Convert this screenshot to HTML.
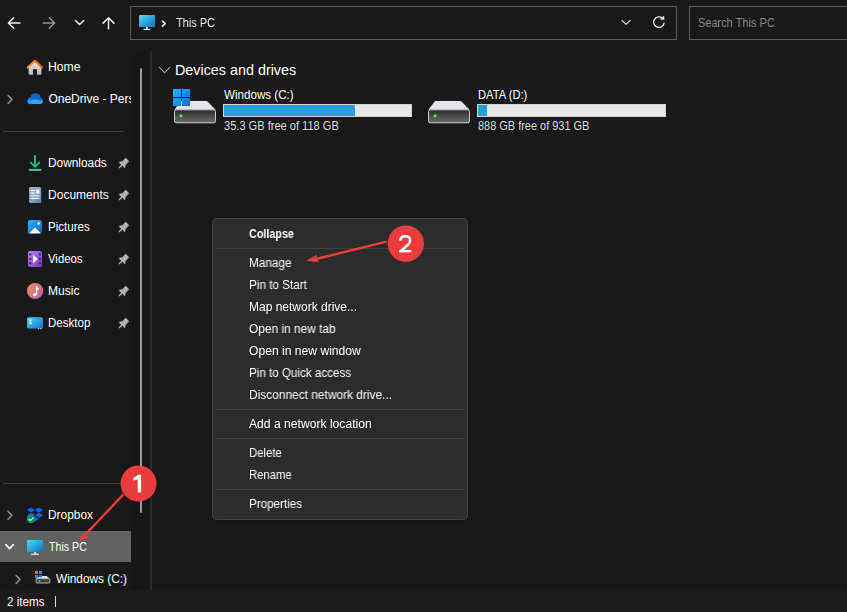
<!DOCTYPE html>
<html><head><meta charset="utf-8">
<style>
*{margin:0;padding:0;box-sizing:border-box}
html,body{width:847px;height:612px;overflow:hidden;background:#191919}
body{position:relative;font-family:"Liberation Sans",sans-serif;color:#fff}
.a{position:absolute}
.t{position:absolute;white-space:nowrap;line-height:20px;font-size:12px;color:#fff}
svg{position:absolute;overflow:visible}
</style></head><body>

<!-- panes -->
<div class="a" style="left:132px;top:51px;width:18px;height:539px;background:#171717"></div>
<div class="a" style="left:150px;top:51px;width:2px;height:539px;background:#2a2a2a"></div>
<div class="a" style="left:0;top:590px;width:847px;height:22px;background:#1c1c1c"></div>

<!-- toolbar icons -->
<svg style="left:0;top:0" width="130" height="45" viewBox="0 0 130 45">
  <g fill="none" stroke-linecap="round" stroke-linejoin="round" stroke-width="1.5">
    <path d="M8.4 23H19.9M13.7 17.7L8.4 23L13.7 28.3" stroke="#f2f2f2"/>
    <path d="M43.1 23H54.6M49.3 17.7L54.6 23L49.3 28.3" stroke="#939393"/>
    <path d="M75.4 20.4L79.6 24.6L83.8 20.4" stroke="#f0f0f0" stroke-width="1.4"/>
    <path d="M108.5 17.7V28.7M103.1 23.1L108.5 17.7L113.9 23.1" stroke="#f2f2f2"/>
  </g>
</svg>

<!-- address bar -->
<div class="a" style="left:130px;top:6px;width:547px;height:34px;border:1px solid #5c5c5c"></div>
<svg style="left:0;top:0" width="847" height="45" viewBox="0 0 847 45">
  <defs>
    <linearGradient id="mon" x1="0" y1="0" x2="1" y2="1"><stop offset="0" stop-color="#45e2f5"/><stop offset="1" stop-color="#0d6fca"/></linearGradient>
  </defs>
  <rect x="139" y="15" width="16" height="12" rx="1" fill="url(#mon)"/>
  <rect x="146" y="27" width="2" height="2" fill="#c9d3dc"/>
  <rect x="143.5" y="28.8" width="7" height="1.3" fill="#d5dde4"/>
  <path d="M162.5 21.1L165.2 23.6L162.5 26.1" fill="none" stroke="#ececec" stroke-width="1.6" stroke-linecap="round" stroke-linejoin="round"/>
  <path d="M622 20.3L626.1 24.3L630.2 20.3" fill="none" stroke="#e0e0e0" stroke-width="1.1" stroke-linecap="round" stroke-linejoin="round"/>
  <path d="M664.1 23.1A5.3 5.3 0 1 1 661.6 17.6" fill="none" stroke="#ececec" stroke-width="1.25" stroke-linecap="round"/>
  <path d="M663.8 15.9L664.2 19.6L660.3 19.4Z" fill="#ececec" stroke="#ececec" stroke-width="0.5" stroke-linejoin="round"/>
</svg>

<!-- search -->
<div class="a" style="left:689px;top:6px;width:170px;height:34px;border:1px solid #5c5c5c"></div>

<!-- nav pane -->
<div class="a" style="left:0;top:531px;width:131px;height:31px;background:#626262"></div>
<div class="a" style="left:3px;top:131px;width:121px;height:1px;background:#3a3a3a"></div>
<div class="a" style="left:3px;top:483px;width:121px;height:1px;background:#3a3a3a"></div>
<div class="a" style="left:140px;top:68px;width:2px;height:445px;background:#9e9e9e;border-radius:1px"></div>

<div class="a" style="left:48px;top:51px;width:83px;height:60px;overflow:hidden">
<div class="t" style="left:0.4px;top:5.84px;font-size:12px;color:#fff;transform:scaleX(1.018);transform-origin:0 0;">Home</div>
<div class="t" style="left:0.4px;top:37.74px;font-size:12px;color:#fff;">OneDrive - Personal</div>

</div>

<!-- status bar -->
<div class="a" style="left:55px;top:596px;width:1px;height:11px;background:#d6d6d6"></div>

<!-- progress bars -->
<div class="a" style="left:223px;top:104px;width:189px;height:13px;background:#e6e6e6;border:1px solid #d2d2d2"></div>
<div class="a" style="left:224px;top:105px;width:131px;height:11px;background:#26a0da"></div>
<div class="a" style="left:477px;top:104px;width:189px;height:13px;background:#e6e6e6;border:1px solid #d2d2d2"></div>
<div class="a" style="left:478px;top:105px;width:9px;height:11px;background:#26a0da"></div>

<!-- icons -->
<svg style="left:0;top:0" width="847" height="612" viewBox="0 0 847 612">
  <defs>
    <linearGradient id="mon2" x1="0" y1="0" x2="1" y2="1"><stop offset="0" stop-color="#45e2f5"/><stop offset="1" stop-color="#0d6fca"/></linearGradient>
    <linearGradient id="roof" x1="0" y1="0" x2="1" y2="0"><stop offset="0" stop-color="#ff9d1c"/><stop offset="1" stop-color="#e8620c"/></linearGradient>
    <linearGradient id="house" x1="0" y1="0" x2="0" y2="1"><stop offset="0" stop-color="#ececec"/><stop offset="1" stop-color="#b4b4b4"/></linearGradient>
    <linearGradient id="dl" x1="0" y1="0" x2="0" y2="1"><stop offset="0" stop-color="#33d39e"/><stop offset="1" stop-color="#22b3a8"/></linearGradient>
    <linearGradient id="doc" x1="0" y1="0" x2="1" y2="1"><stop offset="0" stop-color="#a3c0dc"/><stop offset="1" stop-color="#6283a6"/></linearGradient>
    <linearGradient id="pic" x1="0" y1="0" x2="1" y2="1"><stop offset="0" stop-color="#2fb2f4"/><stop offset="1" stop-color="#0866cc"/></linearGradient>
    <linearGradient id="vid" x1="0" y1="0" x2="1" y2="1"><stop offset="0" stop-color="#bb82f7"/><stop offset="1" stop-color="#7636c9"/></linearGradient>
    <linearGradient id="mus" x1="0" y1="0" x2="1" y2="1"><stop offset="0" stop-color="#f8904c"/><stop offset="1" stop-color="#b859b8"/></linearGradient>
    <linearGradient id="desk" x1="0" y1="0" x2="1" y2="1"><stop offset="0" stop-color="#4dd3f3"/><stop offset="1" stop-color="#0c76d0"/></linearGradient>
    <linearGradient id="win" x1="0" y1="0" x2="1" y2="1"><stop offset="0" stop-color="#25a9f2"/><stop offset="1" stop-color="#0a6ad6"/></linearGradient>
    <linearGradient id="winbig" gradientUnits="userSpaceOnUse" x1="173" y1="89" x2="190" y2="106"><stop offset="0" stop-color="#2db3f6"/><stop offset="1" stop-color="#0b6cd6"/></linearGradient>
    <linearGradient id="winsm" gradientUnits="userSpaceOnUse" x1="35" y1="571" x2="42" y2="578"><stop offset="0" stop-color="#2db3f6"/><stop offset="1" stop-color="#0b6cd6"/></linearGradient>
    <linearGradient id="front" x1="0" y1="0" x2="0" y2="1"><stop offset="0" stop-color="#2a2a2a"/><stop offset="1" stop-color="#6e6e6e"/></linearGradient>
    <radialGradient id="led"><stop offset="0" stop-color="#a8ff9a"/><stop offset="0.5" stop-color="#3ad23a"/><stop offset="1" stop-color="#1a8a1a" stop-opacity="0.3"/></radialGradient>
    <g id="pin"><path d="M-2.4 -7.4H2.4V-2.2L4 -0.5V0.7H0.7V4.6H-0.7V0.7H-4V-0.5L-2.4 -2.2Z" fill="#a9b5bd"/></g>
    <g id="bigdrive">
      <path d="M181 101H207L215.6 109.8H174.4Z" fill="#e4e4e8"/>
      <rect x="174.5" y="109.8" width="41" height="13" rx="2" fill="url(#front)" stroke="#cfcfcf" stroke-width="1"/>
      <circle cx="181" cy="115.9" r="2.2" fill="url(#led)"/>
    </g>
  </defs>

  <!-- Home -->
  <path d="M28.6 67.2L35 61.4L41.4 67.2V73.6Q41.4 74.8 40.2 74.8H37V69.2H33V74.8H29.8Q28.6 74.8 28.6 73.6Z" fill="url(#house)"/>
  <path d="M27.8 67.6L35 60.8L42.2 67.6" fill="none" stroke="url(#roof)" stroke-width="2.1" stroke-linecap="round" stroke-linejoin="round"/>

  <!-- OneDrive -->
  <clipPath id="odc"><circle cx="35.5" cy="98.7" r="5.1"/><circle cx="30.8" cy="100.8" r="3.35"/><circle cx="39.9" cy="101.1" r="3"/><rect x="30.8" y="100.5" width="9.1" height="3.6"/></clipPath>
  <g clip-path="url(#odc)">
    <rect x="26" y="92" width="18" height="13" fill="#1784e6"/>
    <circle cx="35.5" cy="98.7" r="5.1" fill="#0d66c9"/>
    <path d="M26.5 101.4Q31 99.4 35.8 99.2Q40.2 99.5 44 101.9V105H26.5Z" fill="#2aa6f2"/>
  </g>
  <path d="M8.2 95.6L12.1 99.5L8.2 103.4" fill="none" stroke="#8c8c8c" stroke-width="1.5" stroke-linecap="round" stroke-linejoin="round"/>

  <!-- Downloads -->
  <path d="M35 155.8V166.6M30.7 162.5L35 166.8L39.3 162.5" fill="none" stroke="url(#dl)" stroke-width="1.75" stroke-linecap="round" stroke-linejoin="round"/>
  <rect x="28.9" y="168.9" width="12.3" height="2" fill="#2ed0a0"/>
  <use href="#pin" transform="translate(122.2 164.8) rotate(45)"/>

  <!-- Documents -->
  <rect x="29.1" y="186.9" width="12.1" height="16.2" rx="1.6" fill="url(#doc)"/>
  <rect x="31" y="190" width="4.2" height="1.1" fill="#f4f8fc"/>
  <rect x="31" y="192.6" width="4.2" height="1.1" fill="#f4f8fc"/>
  <rect x="36.2" y="189.6" width="3.2" height="4" fill="#f4f8fc"/>
  <rect x="31" y="195.3" width="8.4" height="1.1" fill="#f4f8fc"/>
  <rect x="31" y="197.9" width="8.4" height="1.1" fill="#f4f8fc"/>
  <use href="#pin" transform="translate(122.2 196.8) rotate(45)"/>

  <!-- Pictures -->
  <rect x="27.9" y="220" width="14" height="14" rx="2" fill="url(#pic)"/>
  <path d="M29.3 233.2L35 227.6L40.7 233.2Z" fill="#fff"/>
  <circle cx="38.6" cy="223.4" r="1.3" fill="#fff"/>
  <use href="#pin" transform="translate(122.2 228.8) rotate(45)"/>

  <!-- Videos -->
  <rect x="28" y="251" width="14" height="16" rx="2" fill="url(#vid)"/>
  <g fill="#3e1a70">
    <rect x="29.2" y="253.4" width="2" height="2"/><rect x="29.2" y="257.8" width="2" height="2"/><rect x="29.2" y="262.2" width="2" height="2"/>
    <rect x="38.8" y="253.4" width="2" height="2"/><rect x="38.8" y="257.8" width="2" height="2"/><rect x="38.8" y="262.2" width="2" height="2"/>
  </g>
  <path d="M33 254.6L38 259L33 263.4Z" fill="#f2e8ff"/>
  <use href="#pin" transform="translate(122.2 260.8) rotate(45)"/>

  <!-- Music -->
  <circle cx="35.1" cy="291" r="8.1" fill="url(#mus)"/>
  <path d="M36.6 286.4V294.6" stroke="#fff" stroke-width="1.4"/>
  <path d="M35.9 285.9Q38.9 286.9 38.9 290L37.5 289.4Q37.3 288.2 35.9 287.8Z" fill="#fff"/>
  <ellipse cx="34.8" cy="294.8" rx="1.9" ry="1.7" fill="#fff"/>
  <use href="#pin" transform="translate(122.2 292.8) rotate(45)"/>

  <!-- Desktop -->
  <rect x="27" y="317.2" width="16" height="11.3" rx="1.5" fill="url(#desk)"/>
  <rect x="29.4" y="319.3" width="2.2" height="2" fill="#e8fbff"/>
  <rect x="29.4" y="322.3" width="2.2" height="2" fill="#e8fbff"/>
  <rect x="38" y="328" width="1.2" height="1.2" fill="#c0c0c0"/><rect x="40.2" y="328" width="1.2" height="1.2" fill="#c0c0c0"/>
  <use href="#pin" transform="translate(122.2 324.8) rotate(45)"/>

  <!-- Dropbox -->
  <g fill="#0061fe">
    <path d="M27 510L31 507.4L35 510L31 512.6Z"/>
    <path d="M35 510L39 507.4L43 510L39 512.6Z"/>
    <path d="M27 515.2L31 512.6L35 515.2L31 517.8Z"/>
    <path d="M35 515.2L39 512.6L43 515.2L39 517.8Z"/>
    <path d="M31 519L35 516.4L39 519L35 521.6Z"/>
  </g>
  <circle cx="30.9" cy="519.1" r="4.2" fill="#12954e"/>
  <path d="M29 519.2L30.5 520.5L33 517.8" fill="none" stroke="#e8f5ec" stroke-width="1.1" stroke-linecap="round" stroke-linejoin="round"/>
  <path d="M8 511.4L11.9 515.3L8 519.2" fill="none" stroke="#8c8c8c" stroke-width="1.5" stroke-linecap="round" stroke-linejoin="round"/>

  <!-- This PC -->
  <rect x="27.1" y="540" width="15.8" height="12" rx="1" fill="url(#mon2)"/>
  <rect x="34" y="552" width="2.2" height="2" fill="#c8d2da"/>
  <rect x="30.9" y="553.8" width="8.2" height="1.3" rx="0.6" fill="#d6dee4"/>
  <path d="M5.8 544.7L9.6 548.5L13.4 544.7" fill="none" stroke="#f4f4f4" stroke-width="1.8" stroke-linecap="round" stroke-linejoin="round"/>

  <!-- small Windows drive -->
  <g fill="url(#winsm)">
    <rect x="35" y="571" width="3" height="3"/><rect x="39" y="571" width="3" height="3"/>
    <rect x="35" y="575" width="3" height="3"/><rect x="39" y="575" width="3" height="3"/>
  </g>
  <path d="M42 576H46.5L49.6 578.6H36.2L38 577.2H42Z" fill="#e8e8e8"/>
  <rect x="36.2" y="578.6" width="13.6" height="4.4" rx="0.6" fill="#3e3e3e" stroke="#d0d0d0" stroke-width="0.8"/>
  <circle cx="39.4" cy="580.8" r="0.9" fill="#3ae03a"/>
  <path d="M16.2 575.6L20.1 579.5L16.2 583.4" fill="none" stroke="#8c8c8c" stroke-width="1.5" stroke-linecap="round" stroke-linejoin="round"/>

  <!-- Devices chevron -->
  <path d="M159.4 67.4L164.6 72.6L169.8 67.4" fill="none" stroke="#a8a8a8" stroke-width="1.1" stroke-linecap="round" stroke-linejoin="round"/>

  <!-- drives -->
  <use href="#bigdrive"/>
  <g fill="url(#winbig)">
    <rect x="173" y="89" width="8" height="8"/><rect x="182" y="89" width="8" height="8"/>
    <rect x="173" y="98" width="8" height="8"/><rect x="182" y="98" width="8" height="8"/>
  </g>
  <use href="#bigdrive" transform="translate(254 0)"/>
</svg>



<!-- context menu -->
<div class="a" style="left:212px;top:218px;width:256px;height:302px;background:#2c2c2c;border:1px solid #444444;border-radius:4.5px;box-shadow:0 0 3px rgba(0,0,0,0.35)"></div>
<div class="a" style="left:217px;top:248px;width:246px;height:1px;background:#404040"></div>
<div class="a" style="left:217px;top:409px;width:246px;height:1px;background:#404040"></div>
<div class="a" style="left:217px;top:438px;width:246px;height:1px;background:#404040"></div>
<div class="a" style="left:217px;top:489px;width:246px;height:1px;background:#404040"></div>

<div class="t" style="left:176px;top:12.94px;font-size:12px;color:#ececec;transform:scaleX(0.914);transform-origin:0 0;will-change:transform;">This PC</div>
<div class="t" style="left:698px;top:12.64px;font-size:12px;color:#8c8c8c;transform:scaleX(0.916);transform-origin:0 0;will-change:transform;">Search This PC</div>
<div class="t" style="left:48px;top:153.04px;font-size:12px;color:#fff;transform:scaleX(0.99);transform-origin:0 0;">Downloads</div>
<div class="t" style="left:48px;top:185.04px;font-size:12px;color:#fff;transform:scaleX(1.003);transform-origin:0 0;">Documents</div>
<div class="t" style="left:48px;top:217.04px;font-size:12px;color:#fff;transform:scaleX(0.964);transform-origin:0 0;">Pictures</div>
<div class="t" style="left:48px;top:249.04px;font-size:12px;color:#fff;transform:scaleX(0.946);transform-origin:0 0;">Videos</div>
<div class="t" style="left:48px;top:281.04px;font-size:12px;color:#fff;transform:scaleX(1.008);transform-origin:0 0;">Music</div>
<div class="t" style="left:48px;top:313.04px;font-size:12px;color:#fff;transform:scaleX(0.963);transform-origin:0 0;">Desktop</div>
<div class="t" style="left:48px;top:505.04px;font-size:12px;color:#fff;transform:scaleX(0.992);transform-origin:0 0;">Dropbox</div>
<div class="t" style="left:48.6px;top:536.94px;font-size:12px;color:#fff;transform:scaleX(0.886);transform-origin:0 0;">This PC</div>
<div class="t" style="left:56.4px;top:568.94px;font-size:12px;color:#fff;transform:scaleX(0.985);transform-origin:0 0;">Windows (C:)</div>
<div class="t" style="left:7px;top:591.84px;font-size:12px;color:#fff;transform:scaleX(0.975);transform-origin:0 0;">2 items</div>
<div class="t" style="left:175px;top:60.03px;font-size:14.35px;color:#fff;">Devices and drives</div>
<div class="t" style="left:224px;top:84.64px;font-size:12px;color:#fff;transform:scaleX(0.968);transform-origin:0 0;">Windows (C:)</div>
<div class="t" style="left:224px;top:115.84px;font-size:12px;color:#dcdcdc;transform:scaleX(0.922);transform-origin:0 0;">35.3 GB free of 118 GB</div>
<div class="t" style="left:478px;top:84.64px;font-size:12px;color:#fff;transform:scaleX(0.932);transform-origin:0 0;">DATA (D:)</div>
<div class="t" style="left:478px;top:115.84px;font-size:12px;color:#dcdcdc;transform:scaleX(0.912);transform-origin:0 0;">888 GB free of 931 GB</div>
<div class="t" style="left:249px;top:223.84px;font-size:12px;color:#fff;font-weight:bold;transform:scaleX(0.898);transform-origin:0 0;will-change:transform;">Collapse</div>
<div class="t" style="left:249px;top:252.84px;font-size:12px;color:#ffffff;transform:scaleX(0.98);transform-origin:0 0;will-change:transform;">Manage</div>
<div class="t" style="left:249px;top:274.84px;font-size:12px;color:#ffffff;transform:scaleX(0.975);transform-origin:0 0;will-change:transform;">Pin to Start</div>
<div class="t" style="left:249px;top:296.84px;font-size:12px;color:#ffffff;transform:scaleX(0.998);transform-origin:0 0;will-change:transform;">Map network drive...</div>
<div class="t" style="left:249px;top:318.84px;font-size:12px;color:#ffffff;transform:scaleX(0.991);transform-origin:0 0;will-change:transform;">Open in new tab</div>
<div class="t" style="left:249px;top:340.84px;font-size:12px;color:#ffffff;transform:scaleX(1.01);transform-origin:0 0;will-change:transform;">Open in new window</div>
<div class="t" style="left:249px;top:362.84px;font-size:12px;color:#ffffff;transform:scaleX(0.968);transform-origin:0 0;will-change:transform;">Pin to Quick access</div>
<div class="t" style="left:249px;top:384.84px;font-size:12px;color:#ffffff;transform:scaleX(0.993);transform-origin:0 0;will-change:transform;">Disconnect network drive...</div>
<div class="t" style="left:249px;top:414.04px;font-size:12px;color:#ffffff;transform:scaleX(1.011);transform-origin:0 0;will-change:transform;">Add a network location</div>
<div class="t" style="left:249px;top:442.84px;font-size:12px;color:#ffffff;transform:scaleX(0.943);transform-origin:0 0;will-change:transform;">Delete</div>
<div class="t" style="left:249px;top:464.84px;font-size:12px;color:#ffffff;transform:scaleX(0.939);transform-origin:0 0;will-change:transform;">Rename</div>
<div class="t" style="left:249px;top:493.84px;font-size:12px;color:#ffffff;transform:scaleX(0.969);transform-origin:0 0;will-change:transform;">Properties</div>


<!-- annotations -->
<svg style="left:0;top:0" width="847" height="612" viewBox="0 0 847 612">
  <g fill="#ea3c3c" stroke="none">
    <path d="M386.5 241.7L316 259" stroke="#ea3c3c" stroke-width="2.4"/>
    <path d="M306.5 260.7L316.5 254.8L318.3 262.3Z"/>
    <circle cx="405.8" cy="243.6" r="18.2"/>
    <path d="M123.4 494.4L84.5 535.5" stroke="#ea3c3c" stroke-width="2.4"/>
    <path d="M78.3 541.5L82.3 534L88.6 536.9Z"/>
    <circle cx="138.5" cy="483.5" r="18"/>
  </g>
  <path d="M137.7 474.8H141.1V492.4H137.7V479.3Q135.9 480.3 133.4 480.4V477.7Q136.3 477 137.7 474.8Z" fill="#fff"/>
  <path d="M400.3 240.6C400.4 237.4 402.5 236.3 405.2 236.3C408 236.3 410.1 237.8 410.1 240.4C410.1 242.6 408.7 244.1 406.3 246.2L400.9 251" fill="none" stroke="#fff" stroke-width="2.6"/><rect x="399" y="250" width="12.3" height="2.4" fill="#fff"/>
</svg>

</body></html>
